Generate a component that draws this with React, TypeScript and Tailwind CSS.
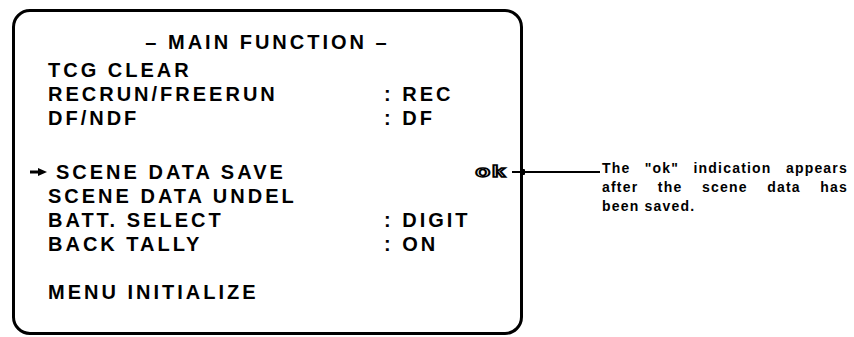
const LABEL_FONT = "font-['Liberation_Sans',Arial,sans-serif]";

type Row = { label: string; value?: string; mt?: string };

const top: Row[] = [
  { label: "TCG CLEAR" },
  { label: "RECRUN/FREERUN", value: "REC" },
  { label: "DF/NDF", value: "DF" },
];

const bottom: Row[] = [
  { label: "SCENE DATA UNDEL" },
  { label: "BATT. SELECT", value: "DIGIT" },
  { label: "BACK TALLY", value: "ON" },
];

function MenuRow({ label, value }: Row) {
  return (
    <div className="grid grid-cols-[336px_1fr] h-[24px] leading-[24px]">
      <span>{label}</span>
      {value && <span>: {value}</span>}
    </div>
  );
}

function Arrow() {
  return (
    <svg width="17" height="8" viewBox="0 0 17 8" className="shrink-0">
      <rect x="0" y="2.5" width="10" height="3" fill="#000" />
      <path d="M8 0 L17 4 L8 8 Z" fill="#000" />
    </svg>
  );
}

export default function App() {
  return (
    <div className={`w-[854px] h-[337px] bg-white text-black flex items-start pl-[12px] pt-[9px] ${LABEL_FONT}`}>
      {/* menu screen */}
      <div className="w-[511px] h-[326px] shrink-0 border-[3px] border-black rounded-[18px] pl-[33px] pt-[18px] text-[20px] font-bold tracking-[3px]">
        <div className="h-[24px] leading-[24px] text-center -ml-[33px]">– MAIN FUNCTION –</div>
        <div className="mt-[4px]">
          {top.map((r) => (
            <MenuRow key={r.label} {...r} />
          ))}
        </div>
        <div className="mt-[30px] h-[24px] leading-[24px] flex items-center -ml-[18px]">
          <Arrow />
          <span className="ml-[9px]">SCENE DATA SAVE</span>
          <span className="ml-auto w-[40px] text-center text-[17px] leading-[24px] tracking-[1px] text-white [-webkit-text-stroke:1.5px_#000] scale-x-[1.45]">
            ok
          </span>
          <span className="relative ml-[1px] -mr-[80px] w-[88px] h-[2px] bg-black shrink-0">
            <span className="absolute left-[9px] top-[-2px] w-[4px] h-[6px] bg-black rounded-[1px]" />
          </span>
        </div>
        {bottom.map((r) => (
          <MenuRow key={r.label} {...r} />
        ))}
        <div className="mt-[24px] h-[24px] leading-[24px]">MENU INITIALIZE</div>
      </div>

      {/* annotation */}
      <div className="ml-[79px] mt-[150px] w-[246px] text-[14px] font-bold leading-[19px] tracking-[1.2px]">
        <div className="flex justify-between">
          <span>The</span>
          <span>"ok"</span>
          <span>indication</span>
          <span>appears</span>
        </div>
        <div className="flex justify-between">
          <span>after</span>
          <span>the</span>
          <span>scene</span>
          <span>data</span>
          <span>has</span>
        </div>
        <div>been saved.</div>
      </div>
    </div>
  );
}
